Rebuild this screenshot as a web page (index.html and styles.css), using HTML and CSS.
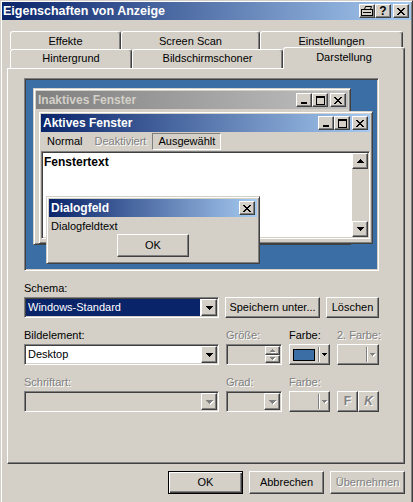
FILE: index.html
```html
<!DOCTYPE html>
<html lang="de">
<head>
    <meta charset="UTF-8">
    <title>Eigenschaften von Anzeige</title>
    <link rel="stylesheet" href="styles.css">
</head>
<body>

    <!-- icon sprites -->
    <svg class="defs" xmlns="http://www.w3.org/2000/svg">
        <symbol id="i-down" viewBox="0 0 7 4"><path d="M0 0h7v1h-1v1h-1v1h-1v1h-1v-1h-1v-1h-1v-1h-1z"/></symbol>
        <symbol id="i-up" viewBox="0 0 7 4"><path d="M3 0h1v1h1v1h1v1h1v1h-7v-1h1v-1h1v-1h1z"/></symbol>
        <symbol id="i-down-s" viewBox="0 0 5 3"><path d="M0 0h5v1h-1v1h-1v1h-1v-1h-1v-1h-1z"/></symbol>
        <symbol id="i-up-s" viewBox="0 0 5 3"><path d="M2 0h1v1h1v1h1v1h-5v-1h1v-1h1z"/></symbol>
        <symbol id="i-close" viewBox="0 0 8 7"><path d="M0 0h2v1h-2zM6 0h2v1h-2zM1 1h2v1h-2zM5 1h2v1h-2zM2 2h4v1h-4zM3 3h2v1h-2zM2 4h4v1h-4zM1 5h2v1h-2zM5 5h2v1h-2zM0 6h2v1h-2zM6 6h2v1h-2z"/></symbol>
        <symbol id="i-min" viewBox="0 0 8 7"><path d="M1 5h6v2h-6z"/></symbol>
        <symbol id="i-max" viewBox="0 0 9 9"><path fill-rule="evenodd" d="M0 0h9v9h-9zM1 2v6h7v-6z"/></symbol>
    </svg>

    <div class="window">
        <div class="titlebar">
            <span class="title">Eigenschaften von Anzeige</span>
            <span class="cap-btn raised">
                <svg width="12" height="10" viewBox="0 0 12 10"><path d="M3.5 3.5l1-3h6l-1 3" fill="none" stroke="#000"/><rect x="0.5" y="3.5" width="11" height="6" fill="none" stroke="#000"/><path d="M2 6.5h8" stroke="#000"/></svg>
            </span>
            <span class="cap-btn raised help">?</span>
            <span class="cap-btn raised gap"><svg class="ico" width="8" height="7"><use href="#i-close"/></svg></span>
        </div>

        <div class="window-body">
            <div class="tabs">
                <div class="tabrow back">
                    <div class="tab w-eff">Effekte</div>
                    <div class="tab w-scan">Screen Scan</div>
                    <div class="tab w-einst">Einstellungen</div>
                </div>
                <div class="tabrow front">
                    <div class="tab w-hint">Hintergrund</div>
                    <div class="tab w-bild">Bildschirmschoner</div>
                    <div class="tab w-dar active">Darstellung</div>
                </div>
            </div>

            <div class="panel">
                <div class="preview">
                    <div class="pwin pwin-inactive">
                        <div class="cbar inactive">
                            <span class="cbar-title">Inaktives Fenster</span>
                            <span class="cap-btn raised"><svg class="ico" width="8" height="7"><use href="#i-min"/></svg></span>
                            <span class="cap-btn raised"><svg class="ico" width="9" height="9"><use href="#i-max"/></svg></span>
                            <span class="cap-btn raised gap"><svg class="ico" width="8" height="7"><use href="#i-close"/></svg></span>
                        </div>
                    </div>

                    <div class="pwin pwin-active">
                        <div class="cbar">
                            <span class="cbar-title">Aktives Fenster</span>
                            <span class="cap-btn raised"><svg class="ico" width="8" height="7"><use href="#i-min"/></svg></span>
                            <span class="cap-btn raised"><svg class="ico" width="9" height="9"><use href="#i-max"/></svg></span>
                            <span class="cap-btn raised gap"><svg class="ico" width="8" height="7"><use href="#i-close"/></svg></span>
                        </div>
                        <div class="pmenu">
                            <span>Normal</span>
                            <span class="dis">Deaktiviert</span>
                            <span class="pressed">Ausgewählt</span>
                        </div>
                        <div class="pclient sunken">
                            <div class="pclient-text">Fenstertext</div>
                            <div class="pscroll">
                                <span class="scroll-btn raised"><svg class="ico" width="7" height="4"><use href="#i-up"/></svg></span>
                                <span class="scroll-btn raised"><svg class="ico" width="7" height="4"><use href="#i-down"/></svg></span>
                            </div>
                        </div>
                    </div>

                    <div class="pwin pwin-dialog">
                        <div class="cbar">
                            <span class="cbar-title">Dialogfeld</span>
                            <span class="cap-btn raised"><svg class="ico" width="8" height="7"><use href="#i-close"/></svg></span>
                        </div>
                        <div class="pdlg-body">
                            <div>Dialogfeldtext</div>
                            <div class="btn raised pdlg-ok">OK</div>
                        </div>
                    </div>
                </div>

                <div class="lbl">Schema:</div>
                <div class="schema-row">
                    <div class="combo sunken w-main">
                        <span class="combo-text selected">Windows-Standard</span>
                        <span class="combo-btn raised"><svg class="ico" width="7" height="4"><use href="#i-down"/></svg></span>
                    </div>
                    <div class="btn raised w-save">Speichern unter...</div>
                    <div class="btn raised w-del">Löschen</div>
                </div>

                <div class="props">
                    <div class="lbl">Bildelement:</div>
                    <div class="lbl dis">Größe:</div>
                    <div class="lbl">Farbe:</div>
                    <div class="lbl dis">2. Farbe:</div>

                    <div class="combo sunken">
                        <span class="combo-text">Desktop</span>
                        <span class="combo-btn raised"><svg class="ico" width="7" height="4"><use href="#i-down"/></svg></span>
                    </div>
                    <div class="combo sunken disabled">
                        <span class="combo-text"></span>
                        <span class="spin-btns">
                            <span class="spin-btn raised"><svg class="ico" width="5" height="3"><use href="#i-up-s"/></svg></span>
                            <span class="spin-btn raised"><svg class="ico" width="5" height="3"><use href="#i-down-s"/></svg></span>
                        </span>
                    </div>
                    <div class="colorbtn raised">
                        <span class="swatch"></span>
                        <span class="cb-sep"></span>
                        <svg class="ico" width="5" height="3"><use href="#i-down-s"/></svg>
                    </div>
                    <div class="colorbtn raised disabled">
                        <span class="swatch"></span>
                        <span class="cb-sep"></span>
                        <svg class="ico" width="5" height="3"><use href="#i-down-s"/></svg>
                    </div>

                    <div class="lbl dis">Schriftart:</div>
                    <div class="lbl dis">Grad:</div>
                    <div class="lbl dis">Farbe:</div>
                    <div class="lbl"></div>

                    <div class="combo sunken disabled">
                        <span class="combo-text"></span>
                        <span class="combo-btn raised"><svg class="ico" width="7" height="4"><use href="#i-down"/></svg></span>
                    </div>
                    <div class="combo sunken disabled">
                        <span class="combo-text"></span>
                        <span class="combo-btn raised"><svg class="ico" width="7" height="4"><use href="#i-down"/></svg></span>
                    </div>
                    <div class="colorbtn raised disabled">
                        <span class="swatch"></span>
                        <span class="cb-sep"></span>
                        <svg class="ico" width="5" height="3"><use href="#i-down-s"/></svg>
                    </div>
                    <div class="fmt-pair">
                        <span class="fmt raised">F</span>
                        <span class="fmt raised italic">K</span>
                    </div>
                </div>
            </div>

            <div class="actions">
                <div class="btn default">OK</div>
                <div class="btn raised">Abbrechen</div>
                <div class="btn raised dis">Übernehmen</div>
            </div>
        </div>
    </div>

</body>
</html>
```

FILE: styles.css
```css
* {
    box-sizing: border-box;
}
body {
    margin: 0;
    overflow: hidden;
    background-color: #d4d0c8;
    font-family: "Liberation Sans", Arial, sans-serif;
    font-size: 11px;
    line-height: 13px;
    color: #000;
}
.defs {
    position: absolute;
    width: 0;
    height: 0;
}
.ico {
    display: block;
    fill: #000;
    shape-rendering: crispEdges;
}

/* bevels */
.raised {
    border: 1px solid;
    border-color: #fff #404040 #404040 #fff;
    box-shadow: inset -1px -1px #808080;
    background-color: #d4d0c8;
}
.sunken {
    border: 1px solid;
    border-color: #808080 #fff #fff #808080;
    box-shadow: inset 1px 1px #404040, inset -1px -1px #d4d0c8;
    padding: 1px;
}
.dis {
    color: #808080;
    text-shadow: 1px 1px #fff;
}

/* main window */
.window {
    width: 413px;
    height: 512px;
    padding: 1px;
    border: 1px solid;
    border-color: #d4d0c8 #404040 #404040 #d4d0c8;
    box-shadow: inset 1px 1px #fff, inset -1px -1px #808080;
    background-color: #d4d0c8;
}
.titlebar {
    display: flex;
    align-items: center;
    height: 18px;
    padding: 0 2px 0 1px;
    background: linear-gradient(to right, #0a246a, #a6caf0);
}
.title {
    flex: 1;
    color: #fff;
    font-weight: bold;
    font-size: 12.5px;
}
.cap-btn {
    display: flex;
    align-items: center;
    justify-content: center;
    width: 16px;
    height: 14px;
    flex-shrink: 0;
}
.cap-btn.gap {
    margin-left: 2px;
}
.cap-btn.help {
    font-weight: bold;
    font-size: 12px;
}
.window-body {
    padding: 11px 6px 0 5px;
}

/* tabs */
.tabs {
    padding-left: 3px;
}
.tabrow {
    display: flex;
    align-items: flex-start;
}
.tab {
    height: 18px;
    padding-top: 3px;
    border: 1px solid;
    border-bottom: 0;
    border-color: #fff #404040 transparent #fff;
    border-radius: 3px 3px 0 0;
    box-shadow: inset -1px 0 #808080;
    text-align: center;
    white-space: nowrap;
}
.front {
    height: 20px;
    margin-bottom: -1px;
}
.front .tab {
    height: 19px;
    padding-top: 2px;
}
.front .tab.active {
    position: relative;
    z-index: 1;
    height: 22px;
    margin-top: -2px;
    padding-top: 3px;
    background-color: #d4d0c8;
}
.w-eff { width: 111px; }
.w-scan { width: 139px; }
.w-einst { width: 143px; }
.w-hint { width: 122px; }
.w-bild { width: 151px; }
.w-dar { width: 122px; }

.panel {
    height: 396px;
    padding: 9px 16px 0;
    border: 1px solid;
    border-color: #fff #404040 #404040 #fff;
    box-shadow: inset -1px -1px #808080;
}

/* preview of the scheme */
.preview {
    position: relative;
    width: 355px;
    height: 193px;
    margin-bottom: 11px;
    border: 1px solid;
    border-color: #808080 #fff #fff #808080;
    box-shadow: inset 1px 1px #404040, inset -1px -1px #d4d0c8;
    background-color: #3a6ea5;
}
.pwin {
    position: absolute;
    padding: 2px;
    border: 1px solid;
    border-color: #d4d0c8 #404040 #404040 #d4d0c8;
    box-shadow: inset 1px 1px #fff, inset -1px -1px #808080;
    background-color: #d4d0c8;
}
.pwin-inactive {
    left: 8px;
    top: 9px;
    width: 318px;
    height: 157px;
}
.pwin-active {
    left: 13px;
    top: 32px;
    width: 335px;
    height: 133px;
}
.pwin-dialog {
    left: 21px;
    top: 117px;
    width: 214px;
    height: 68px;
}
.cbar {
    display: flex;
    align-items: center;
    height: 18px;
    padding: 0 2px;
    background: linear-gradient(to right, #0a246a, #a6caf0);
    color: #fff;
    font-weight: bold;
    font-size: 12px;
}
.cbar.inactive {
    background: linear-gradient(to right, #808080, #c0c0c0);
    color: #d4d0c8;
}
.cbar-title {
    flex: 1;
    white-space: nowrap;
}
.pmenu {
    display: flex;
    align-items: center;
    height: 19px;
}
.pmenu span {
    padding: 0 5px;
    line-height: 15px;
    border: 1px solid transparent;
}
.pmenu .pressed {
    border-color: #808080 #fff #fff #808080;
}
.pclient {
    display: flex;
    height: 88px;
    background-color: #fff;
}
.pclient-text {
    flex: 1;
    padding: 2px 1px;
    font-weight: bold;
    font-size: 12px;
    line-height: 14px;
}
.pscroll {
    display: flex;
    flex-direction: column;
    justify-content: space-between;
    width: 16px;
    background-color: #d4d0c8;
}
.scroll-btn {
    display: flex;
    align-items: center;
    justify-content: center;
    height: 16px;
}
.pdlg-body {
    padding: 3px 2px 0;
}
.pdlg-ok {
    width: 72px;
    margin: 1px auto 0;
}

/* form controls */
.btn {
    display: flex;
    align-items: center;
    justify-content: center;
    height: 21px;
    white-space: nowrap;
}
.btn.default {
    border: 1px solid #000;
    box-shadow: inset 1px 1px #fff, inset -1px -1px #404040, inset -2px -2px #808080;
    background-color: #d4d0c8;
}
.pdlg-ok,
.actions .btn {
    height: 23px;
}
.w-save { width: 95px; }
.w-del { width: 53px; }

.lbl {
    height: 13px;
    margin-bottom: 2px;
    white-space: nowrap;
}
.schema-row {
    display: flex;
    gap: 6px;
    margin-bottom: 11px;
}
.combo {
    display: flex;
    height: 21px;
    background-color: #fff;
}
.w-main {
    width: 195px;
}
.combo-text {
    flex: 1;
    padding-left: 2px;
    line-height: 17px;
    white-space: nowrap;
}
.combo-text.selected {
    margin-right: 1px;
    background-color: #0a246a;
    color: #fff;
}
.combo-btn {
    display: flex;
    align-items: center;
    justify-content: center;
    width: 16px;
}
.combo.disabled {
    background-color: #d4d0c8;
}
.disabled .ico {
    fill: #808080;
    filter: drop-shadow(1px 1px 0 #fff);
}
.spin-btns {
    display: flex;
    flex-direction: column;
    width: 15px;
}
.spin-btn {
    display: flex;
    flex: 1;
    align-items: center;
    justify-content: center;
}
.props {
    display: grid;
    grid-template-columns: 195px 56px 41px 42px;
    column-gap: 7px;
}
.props > .combo,
.props > .colorbtn,
.props > .fmt-pair {
    margin-bottom: 11px;
}
.colorbtn {
    display: flex;
    align-items: center;
    height: 21px;
    padding-left: 3px;
}
.swatch {
    width: 22px;
    height: 12px;
    border: 1px solid #000;
    background-color: #3a6ea5;
}
.colorbtn.disabled .swatch {
    visibility: hidden;
}
.cb-sep {
    width: 2px;
    height: 15px;
    margin: 0 2px 0 3px;
    border-left: 1px solid #808080;
    border-right: 1px solid #fff;
}
.fmt-pair {
    display: flex;
}
.fmt {
    display: flex;
    align-items: center;
    justify-content: center;
    width: 21px;
    height: 21px;
    font-weight: bold;
    font-size: 12px;
    color: #808080;
    text-shadow: 1px 1px #fff;
}
.fmt.italic {
    font-style: italic;
}
.actions {
    display: flex;
    justify-content: flex-end;
    gap: 6px;
    margin-top: 7px;
}
.actions .btn {
    width: 75px;
}
```
